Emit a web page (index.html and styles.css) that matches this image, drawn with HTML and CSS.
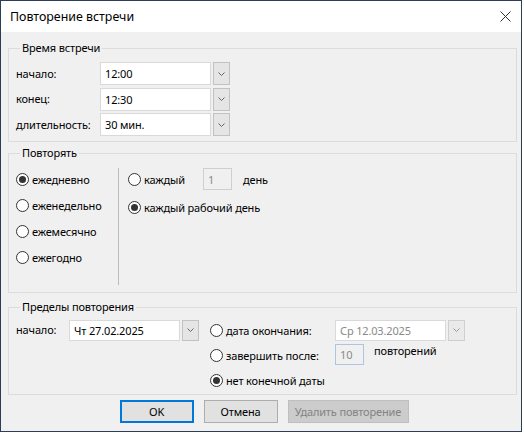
FILE: index.html
```html
<!DOCTYPE html>
<html lang="ru">
<head>
<meta charset="utf-8">
<title>Повторение встречи</title>
<link rel="stylesheet" href="styles.css">
</head>
<body>
<div class="window">
  <div class="titlebar">
    <span class="title">Повторение встречи</span>
    <svg class="close" width="11" height="11" viewBox="0 0 11 11"><path d="M0.5 0.5 L10.5 10.5 M10.5 0.5 L0.5 10.5" stroke="#333" stroke-width="1" fill="none"/></svg>
  </div>
  <div class="content">
    <fieldset class="group g-time">
      <legend>Время встречи</legend>
      <div class="time-grid">
        <span class="lbl">начало:</span>
        <div class="combo"><span class="field">12:00</span><span class="drop"><svg width="7" height="4" viewBox="0 0 7 4"><path d="M0.5 0.5 L3.5 3.5 L6.5 0.5" stroke="#666" fill="none"/></svg></span></div>
        <span class="lbl">конец:</span>
        <div class="combo"><span class="field">12:30</span><span class="drop"><svg width="7" height="4" viewBox="0 0 7 4"><path d="M0.5 0.5 L3.5 3.5 L6.5 0.5" stroke="#666" fill="none"/></svg></span></div>
        <span class="lbl">длительность:</span>
        <div class="combo"><span class="field">30 мин.</span><span class="drop"><svg width="7" height="4" viewBox="0 0 7 4"><path d="M0.5 0.5 L3.5 3.5 L6.5 0.5" stroke="#666" fill="none"/></svg></span></div>
      </div>
    </fieldset>

    <fieldset class="group g-repeat">
      <legend>Повторять</legend>
      <div class="repeat">
        <div class="freq">
          <div class="radio-row"><span class="radio on"></span><span>ежедневно</span></div>
          <div class="radio-row"><span class="radio"></span><span>еженедельно</span></div>
          <div class="radio-row"><span class="radio"></span><span>ежемесячно</span></div>
          <div class="radio-row"><span class="radio"></span><span>ежегодно</span></div>
        </div>
        <div class="divider"></div>
        <div class="daily">
          <div class="daily-row">
            <div class="radio-row every"><span class="radio"></span><span>каждый</span></div>
            <span class="box num">1</span>
            <span class="unit">день</span>
          </div>
          <div class="radio-row"><span class="radio on"></span><span>каждый рабочий день</span></div>
        </div>
      </div>
    </fieldset>

    <fieldset class="group g-range">
      <legend>Пределы повторения</legend>
      <div class="range">
        <div class="start">
          <span class="lbl start-lbl">начало:</span>
          <div class="combo"><span class="field">Чт 27.02.2025</span><span class="drop"><svg width="7" height="4" viewBox="0 0 7 4"><path d="M0.5 0.5 L3.5 3.5 L6.5 0.5" stroke="#666" fill="none"/></svg></span></div>
        </div>
        <div class="end-grid">
          <div class="radio-row"><span class="radio"></span><span>дата окончания:</span></div>
          <div class="combo disabled"><span class="field">Ср 12.03.2025</span><span class="drop"><svg width="7" height="4" viewBox="0 0 7 4"><path d="M0.5 0.5 L3.5 3.5 L6.5 0.5" stroke="#999" fill="none"/></svg></span></div>
          <div class="radio-row"><span class="radio"></span><span>завершить после:</span></div>
          <div class="after"><span class="box num blue">10</span><span class="unit2">повторений</span></div>
          <div class="radio-row"><span class="radio on"></span><span>нет конечной даты</span></div>
        </div>
      </div>
    </fieldset>

    <div class="buttons">
      <span class="btn default">OK</span>
      <span class="btn">Отмена</span>
      <span class="btn off">Удалить повторение</span>
    </div>
  </div>
</div>
</body>
</html>
```

FILE: styles.css
```css
* { box-sizing: border-box; }
html, body { margin: 0; padding: 0; background: #ffffff; }
body {
  font-family: "Noto Sans", "Open Sans", sans-serif;
  font-size: 11px;
  letter-spacing: -0.15px;
  color: #000;
}
.window {
  width: 522px;
  height: 432px;
  border: 1px solid #2c3e57;
  display: flex;
  flex-direction: column;
  background: #f0f0f0;
}
.titlebar {
  height: 31px;
  background: #fff;
  display: flex;
  align-items: center;
  justify-content: space-between;
  padding: 0 10px 1px 9px;
}
.title { font-size: 12.4px; letter-spacing: 0; color: #000; }
.close { display: block; }
.content {
  flex: 1;
  padding: 8px 4px 0 7px;
  display: flex;
  flex-direction: column;
}
.group {
  margin: 0;
  padding: 0;
  border: 1px solid #dcdcdc;
  min-inline-size: 0;
}
.group legend {
  margin-left: 4px;
  padding: 0 2px;
  line-height: 16px;
  height: 16px;
}
.g-time { padding: 6px 0 5px 7px; }
.time-grid {
  display: grid;
  grid-template-columns: 84px auto;
  row-gap: 2.5px;
  align-items: center;
  justify-content: start;
}
.lbl { line-height: 16px; }
.combo { display: flex; height: 23px; }
.field {
  width: 111px;
  height: 100%;
  background: #fff;
  border: 1px solid #d9d9d9;
  padding-left: 4px;
  display: flex;
  align-items: center;
}
.drop {
  width: 17px;
  height: 100%;
  margin-left: 2px;
  background: #e5e5e5;
  border: 1px solid #c2c2c2;
  display: flex;
  align-items: center;
  justify-content: center;
}
.drop svg { display: block; }
.combo.disabled .field { color: #8a8a8a; }
.combo.disabled .drop { background: #eaeaea; border-color: #cfcfcf; }

.g-repeat { margin-top: 3px; padding: 7px 0 7px 7px; }
.repeat { display: flex; height: 117px; }
.freq {
  width: 102px;
  display: flex;
  flex-direction: column;
  gap: 4px;
}
.radio-row {
  display: flex;
  align-items: center;
  height: 22px;
  gap: 3px;
  white-space: nowrap;
}
.radio {
  width: 13px;
  height: 13px;
  border: 1px solid #333;
  border-radius: 50%;
  background: #fff;
  display: flex;
  align-items: center;
  justify-content: center;
  flex: none;
}
.radio.on::after {
  content: "";
  width: 7px;
  height: 7px;
  border-radius: 50%;
  background: #333;
}
.divider { width: 1px; background: #bcbcbc; }
.daily {
  margin-left: 9px;
  display: flex;
  flex-direction: column;
  gap: 6px;
}
.daily-row { display: flex; align-items: center; height: 22px; }
.every { width: 75px; }
.box {
  height: 22px;
  border: 1px solid #cfcfcf;
  background: #f0f0f0;
  color: #8a8a8a;
  display: flex;
  align-items: center;
  padding-left: 4px;
}
.num { width: 29px; }
.box.blue { border-color: #a9c6e2; }
.unit { margin-left: 11px; }

.g-range { margin-top: 6px; padding: 4px 0 3px 7px; }
.range { display: flex; }
.start { display: flex; align-items: center; height: 22px; }
.start-lbl { width: 53px; }
.start .combo, .end-grid .combo { height: 21px; }
.end-grid {
  margin-left: 11px;
  display: grid;
  grid-template-columns: 125px auto;
  grid-auto-rows: 22px;
  row-gap: 3px;
  align-items: center;
}
.after { display: flex; align-items: flex-start; height: 22px; }
.after .box { height: 21px; }
.unit2 { margin-left: 10px; line-height: 14px; }

.buttons {
  margin-top: 5px;
  padding-left: 3px;
  display: flex;
  justify-content: center;
  gap: 10px;
}
.btn {
  height: 23px;
  width: 74px;
  border: 1px solid #adadad;
  background: #e1e1e1;
  display: flex;
  align-items: center;
  justify-content: center;
}
.btn.default { border: 1px solid #0078d7; box-shadow: inset 0 0 0 1px #0078d7; }
.btn.off {
  width: 121px;
  background: #cccccc;
  border-color: #bfbfbf;
  color: #838383;
}
```
